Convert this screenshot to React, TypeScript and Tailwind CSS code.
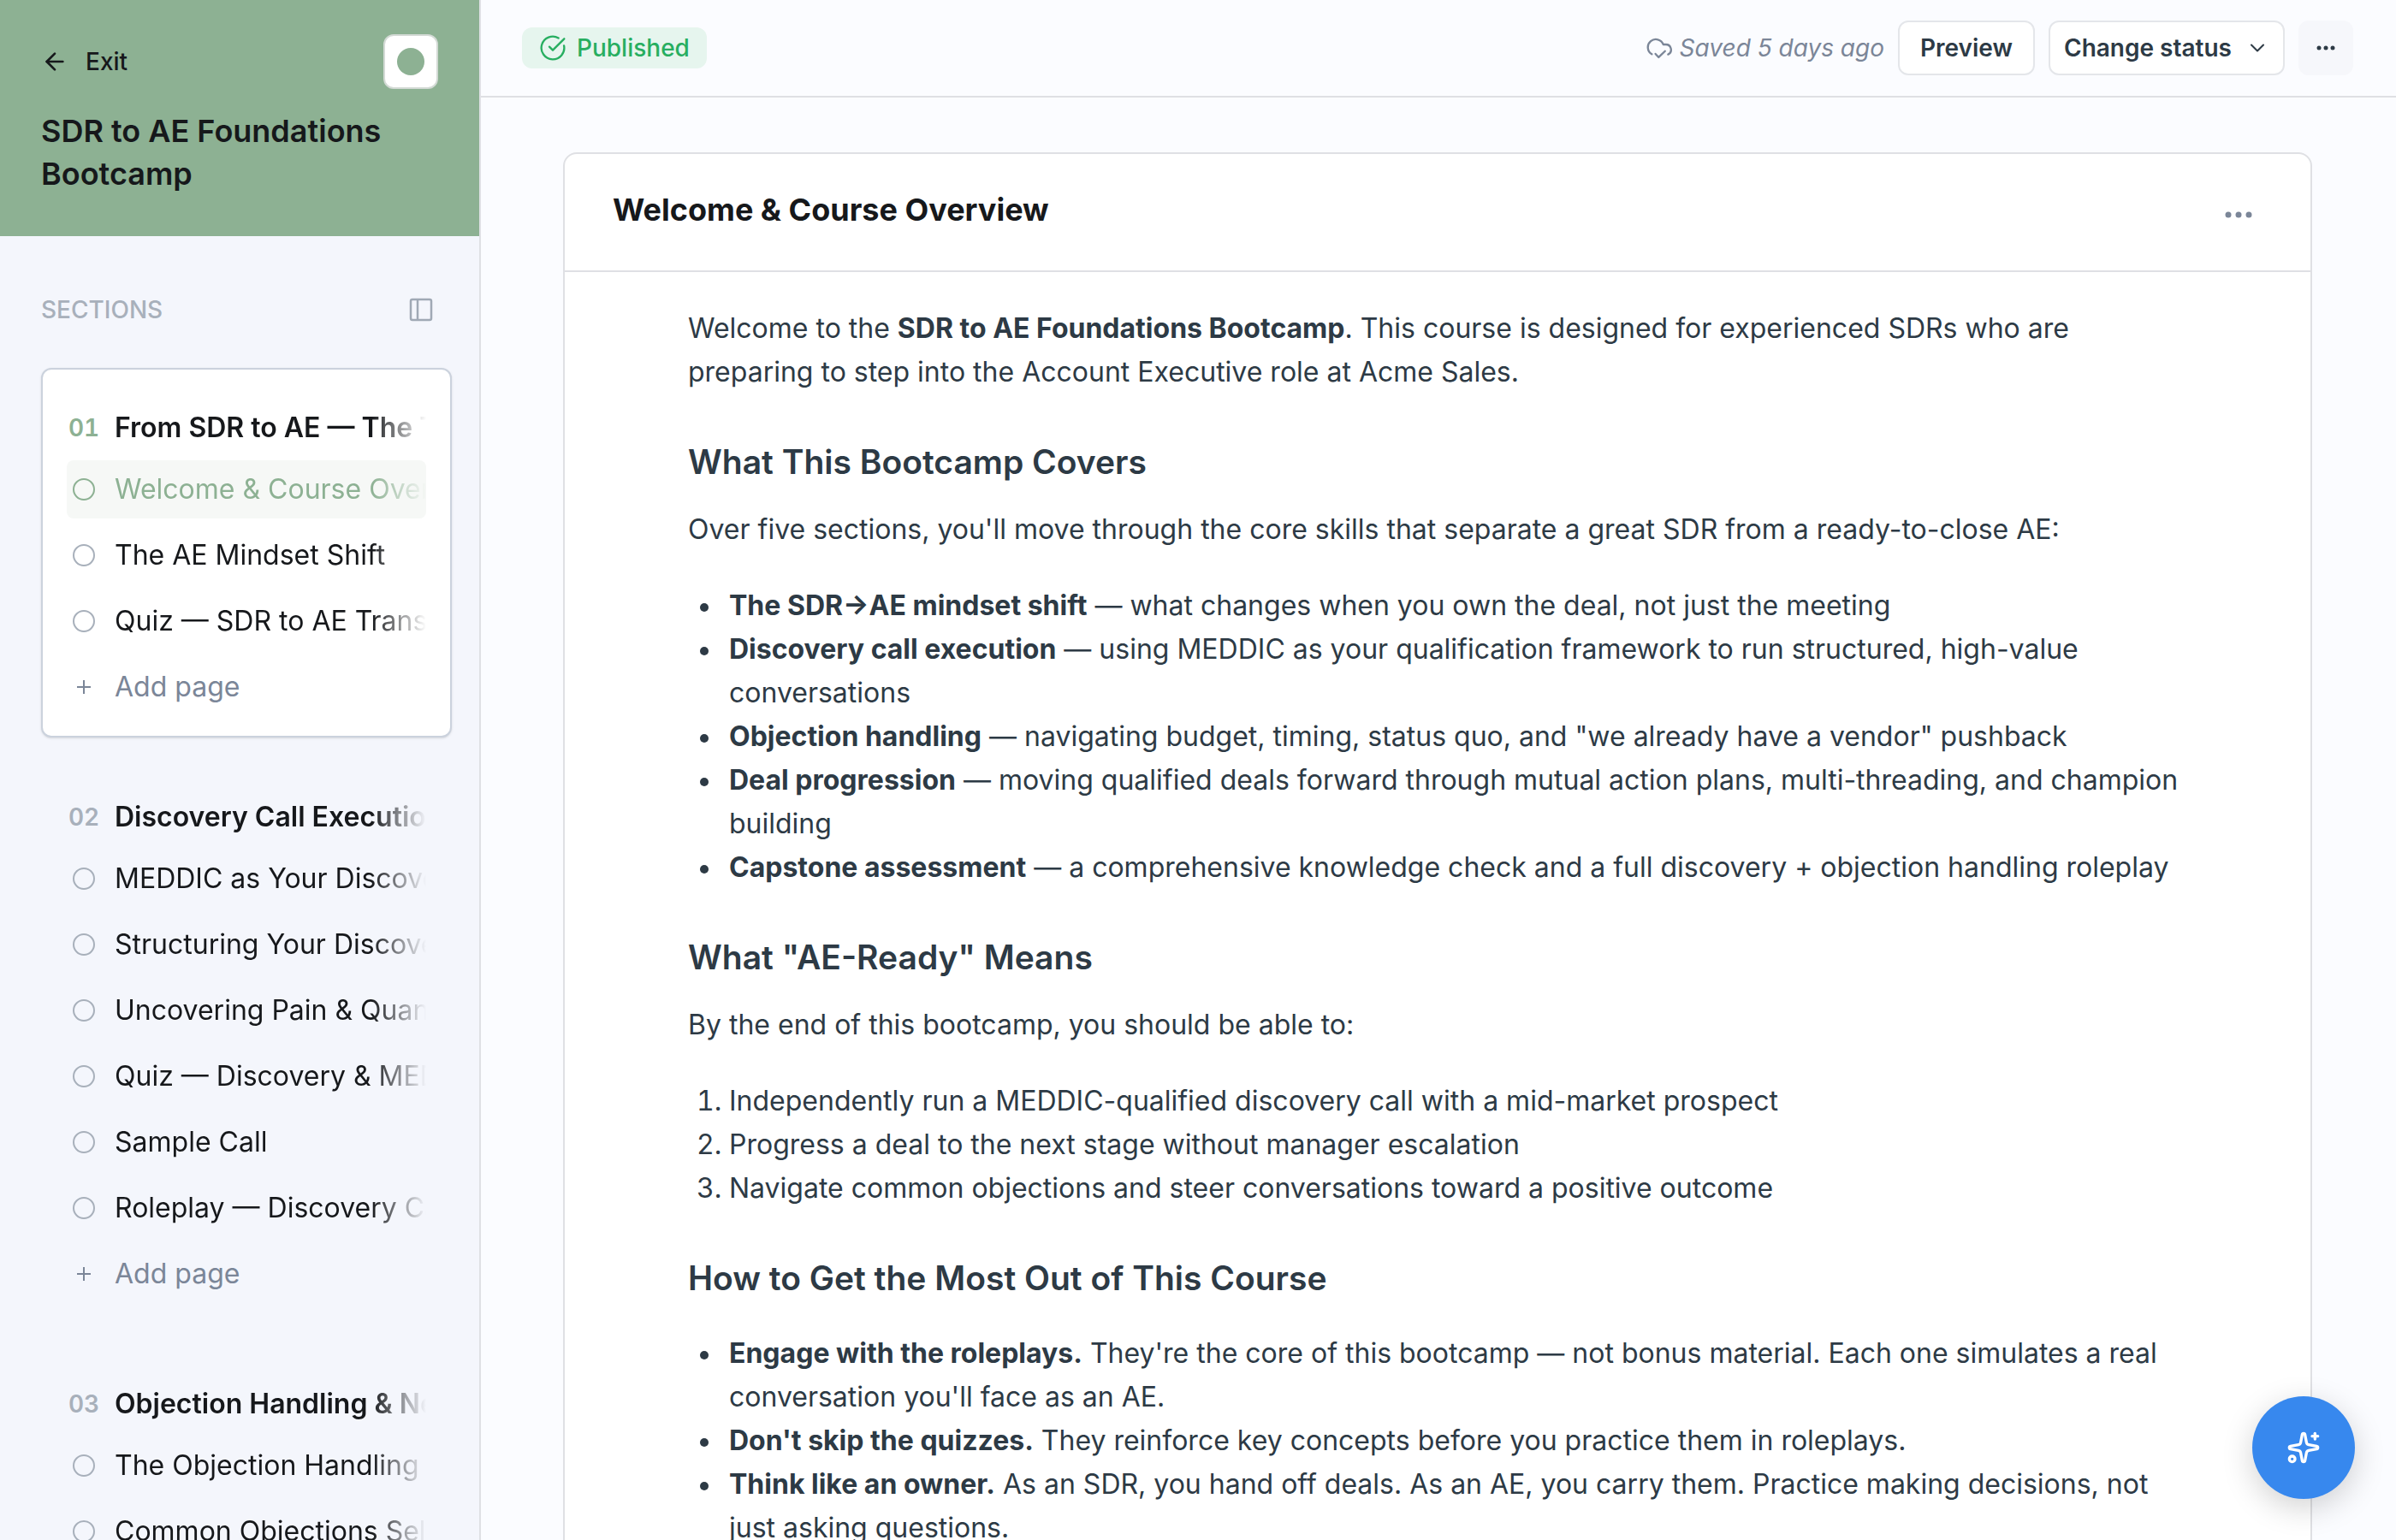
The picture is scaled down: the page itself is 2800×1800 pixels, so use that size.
import React from 'react';
import { ArrowLeft, ChevronDown, CircleCheckBig, Sparkles } from 'lucide-react';

interface Section {
  number: string;
  title: string;
  pages: string[];
}

interface Point {
  term: string;
  text: string;
}

const sections: Section[] = [
  {
    number: '01',
    title: 'From SDR to AE — The Transition',
    pages: ['Welcome & Course Overview', 'The AE Mindset Shift', 'Quiz — SDR to AE Transition'],
  },
  {
    number: '02',
    title: 'Discovery Call Execution',
    pages: [
      'MEDDIC as Your Discovery Framework',
      'Structuring Your Discovery Call',
      'Uncovering Pain & Quantifying Impact',
      'Quiz — Discovery & MEDDIC',
      'Sample Call',
      'Roleplay — Discovery Call',
    ],
  },
  {
    number: '03',
    title: 'Objection Handling & Negotiation',
    pages: ['The Objection Handling Framework', 'Common Objections Sellers Face'],
  },
];

const covers: Point[] = [
  { term: 'The SDR→AE mindset shift', text: ' — what changes when you own the deal, not just the meeting' },
  { term: 'Discovery call execution', text: ' — using MEDDIC as your qualification framework to run structured, high-value conversations' },
  { term: 'Objection handling', text: ' — navigating budget, timing, status quo, and "we already have a vendor" pushback' },
  { term: 'Deal progression', text: ' — moving qualified deals forward through mutual action plans, multi-threading, and champion building' },
  { term: 'Capstone assessment', text: ' — a comprehensive knowledge check and a full discovery + objection handling roleplay' },
];

const outcomes = [
  'Independently run a MEDDIC-qualified discovery call with a mid-market prospect',
  'Progress a deal to the next stage without manager escalation',
  'Navigate common objections and steer conversations toward a positive outcome',
];

const tips: Point[] = [
  { term: 'Engage with the roleplays.', text: " They're the core of this bootcamp — not bonus material. Each one simulates a real conversation you'll face as an AE." },
  { term: "Don't skip the quizzes.", text: ' They reinforce key concepts before you practice them in roleplays.' },
  { term: 'Think like an owner.', text: ' As an SDR, you hand off deals. As an AE, you carry them. Practice making decisions, not just asking questions.' },
];

// long titles fade out at the right edge instead of using an ellipsis
const fade = '[mask-image:linear-gradient(to_right,black_calc(100%-64px),transparent)]';

const SectionCard: React.FC<{ section: Section; selected: boolean }> = ({ section, selected }) => (
  <section
    className={`w-[480px] rounded-xl border-2 px-7 pt-10 pb-[23px] ${
      selected ? 'bg-white border-[#cbd2dd] shadow-sm' : 'border-transparent'
    }`}
  >
    <div className="flex h-14 items-center">
      <span className={`w-14 shrink-0 pl-0.5 text-[28px] font-semibold tabular-nums ${selected ? 'text-[#8db193]' : 'text-[#a8b0bb]'}`}>
        {section.number}
      </span>
      <h2 className={`flex-1 overflow-hidden whitespace-nowrap text-[32px] font-semibold text-[#16181b] ${fade}`}>
        {section.title}
      </h2>
    </div>
    <ul className="flex flex-col gap-[9px] pt-2.5">
      {section.pages.map((page, i) => {
        const active = selected && i === 0;
        return (
          <li key={page}>
            <button
              className={`flex h-[68px] w-full items-center rounded-lg text-left text-[32px] ${
                active ? 'bg-[#f6f8f6] text-[#8db193]' : 'text-[#16181b]'
              }`}
            >
              <span className="w-14 shrink-0 pl-[7px]">
                <span className={`block size-[26px] rounded-full border-2 ${active ? 'border-[#8db193]' : 'border-[#a8b0bb]'}`} />
              </span>
              <span className={`flex-1 overflow-hidden whitespace-nowrap ${fade}`}>{page}</span>
            </button>
          </li>
        );
      })}
      <li>
        <button className="flex h-[68px] w-full items-center text-left text-[32px] text-[#7b8698]">
          <span className="w-14 shrink-0 pl-3">
            <svg className="size-4" viewBox="0 0 16 16" fill="none" stroke="currentColor" strokeWidth="2">
              <path d="M8 0v16M0 8h16" />
            </svg>
          </span>
          Add page
        </button>
      </li>
    </ul>
  </section>
);

const Heading: React.FC<{ children: React.ReactNode }> = ({ children }) => (
  <h3 className="mt-14 mb-[29px] text-[39px] leading-[48px] font-semibold">{children}</h3>
);

const BulletList: React.FC<{ items: Point[] }> = ({ items }) => (
  <ul className="mt-[38px] pl-3.5">
    {items.map(item => (
      <li key={item.term} className="flex gap-6">
        <span className="mt-[23px] size-2.5 shrink-0 rounded-full bg-[#2d3a45]" />
        <p><strong className="font-bold">{item.term}</strong>{item.text}</p>
      </li>
    ))}
  </ul>
);

const App: React.FC = () => (
  <div className="flex h-screen overflow-hidden bg-[#fbfcff] font-['Inter',sans-serif]">
    {/* Sidebar */}
    <aside className="w-[562px] shrink-0 overflow-hidden border-r-2 border-[#dfe0e4] bg-[#f4f6fc]">
      <div className="flex h-[276px] flex-col bg-[#8db193] px-12 pt-10 text-[#16181b]">
        <div className="flex items-center justify-between">
          <a href="#" className="flex items-center gap-5 text-[28px] font-medium">
            <ArrowLeft className="size-8" strokeWidth={2} />
            Exit
          </a>
          <button aria-label="Course colour" className="flex size-16 items-center justify-center rounded-xl border-2 border-[#d3dad5] bg-white">
            <span className="size-8 rounded-full bg-[#8db193]" />
          </button>
        </div>
        <h1 className="mt-6 text-[36px] leading-[50px] font-semibold">SDR to AE Foundations Bootcamp</h1>
      </div>

      <div className="flex items-center justify-between px-12 pt-[65px]">
        <span className="text-[28px] font-medium text-[#a8b0bb]">SECTIONS</span>
        <button aria-label="Toggle sections panel" className="px-1.5 text-[#a0a9b5]">
          <svg className="size-7" viewBox="0 0 28 28" fill="none" stroke="currentColor" strokeWidth="2.5">
            <rect x="2" y="2" width="24" height="24" rx="2" />
            <path d="M10 2v24" />
          </svg>
        </button>
      </div>

      <nav className="flex flex-col gap-[23px] pt-[47px] pl-12">
        {sections.map((section, i) => (
          <SectionCard key={section.number} section={section} selected={i === 0} />
        ))}
      </nav>
    </aside>

    <div className="flex min-w-0 flex-1 flex-col">
      {/* Top bar */}
      <header className="flex h-[114px] shrink-0 items-center justify-between border-b-2 border-[#dfe0e4] pr-[50px] pl-12">
        <span className="flex h-12 items-center gap-3 rounded-xl bg-[#e6f5ee] px-5 text-[28px] font-medium text-[#27ae60]">
          <CircleCheckBig className="size-8" strokeWidth={1.75} />
          Published
        </span>
        <div className="flex items-center gap-4">
          <span className="flex items-center gap-2 text-[28px] text-[#7b8698] italic">
            <svg className="size-8" viewBox="0 0 24 24" fill="none" stroke="currentColor" strokeWidth="1.75" strokeLinecap="round" strokeLinejoin="round">
              <path d="M5.5 17.5A7 7 0 1 1 15.6 9h1.9a4.6 4.6 0 0 1 2.3 8.7" />
              <path d="m8.7 17.2 2.8 3 5.6-5.4" />
            </svg>
            Saved 5 days ago
          </span>
          <button className="h-16 rounded-xl border-2 border-[#e4e6ea] bg-white px-6 text-[28px] font-semibold text-[#2d3a45]">Preview</button>
          <button className="flex h-16 items-center gap-4 rounded-xl border-2 border-[#e4e6ea] bg-white px-4 text-[28px] font-semibold text-[#2d3a45]">
            Change status
            <ChevronDown className="size-7" strokeWidth={1.75} />
          </button>
          <button aria-label="More actions" className="flex size-16 items-center justify-center rounded-xl bg-[#f6f7fb] text-[#2d3a45]">
            <svg className="size-6" viewBox="0 0 24 24" fill="currentColor">
              <circle cx="4" cy="12" r="2.5" />
              <circle cx="12" cy="12" r="2.5" />
              <circle cx="20" cy="12" r="2.5" />
            </svg>
          </button>
        </div>
      </header>

      <main className="min-h-0 flex-1 overflow-hidden pt-16 pr-[98px] pl-24">
        <article className="rounded-2xl border-2 border-[#dfe0e4] bg-white">
          <div className="flex h-[138px] items-center justify-between border-b-2 border-[#dfe0e4] px-14">
            <h2 className="pb-1.5 text-[36px] font-bold text-[#16181b]">Welcome &amp; Course Overview</h2>
            <button aria-label="Page options" className="px-3 pt-1.5 text-[#7b8698]">
              <svg className="size-8" viewBox="0 0 32 32" fill="currentColor">
                <circle cx="4" cy="16" r="3.5" />
                <circle cx="16" cy="16" r="3.5" />
                <circle cx="28" cy="16" r="3.5" />
              </svg>
            </button>
          </div>

          <div className="px-36 pt-10 pb-24 text-[32px] leading-[51px] text-[#2d3a45]">
            <p>
              Welcome to the <strong className="font-bold">SDR to AE Foundations Bootcamp</strong>. This course is designed for experienced SDRs who are preparing to step into the Account Executive role at Acme Sales.
            </p>

            <Heading>What This Bootcamp Covers</Heading>
            <p>Over five sections, you'll move through the core skills that separate a great SDR from a ready-to-close AE:</p>
            <BulletList items={covers} />

            <Heading>What "AE-Ready" Means</Heading>
            <p>By the end of this bootcamp, you should be able to:</p>
            <ol className="mt-[38px] list-decimal pl-12">
              {outcomes.map(text => <li key={text}>{text}</li>)}
            </ol>

            <Heading>How to Get the Most Out of This Course</Heading>
            <BulletList items={tips} />
          </div>
        </article>
      </main>
    </div>

    {/* Assistant button */}
    <button aria-label="Ask the assistant" className="fixed right-12 bottom-12 flex size-[120px] items-center justify-center rounded-full bg-[#3788ee] text-white shadow-[0_10px_36px_rgba(0,0,0,0.18)]">
      <Sparkles className="size-10" strokeWidth={2} />
    </button>
  </div>
);

export default App;
